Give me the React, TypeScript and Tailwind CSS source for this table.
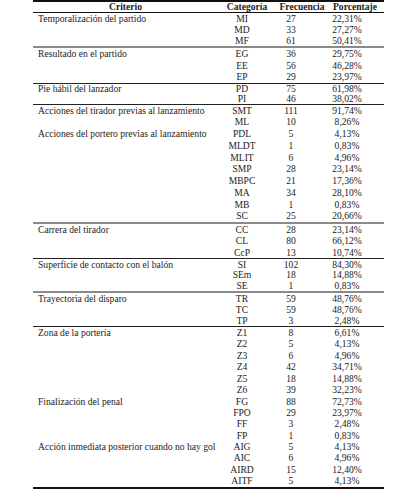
const GROUPS = [
  {
    label: "Temporalización del partido",
    h: "h-[35px]",
    sep: "gray",
    rows: [
      ["MI", "27", "22,31%"],
      ["MD", "33", "27,27%"],
      ["MF", "61", "50,41%"],
    ],
  },
  {
    label: "Resultado en el partido",
    h: "h-[36px]",
    sep: "black",
    rows: [
      ["EG", "36", "29,75%"],
      ["EE", "56", "46,28%"],
      ["EP", "29", "23,97%"],
    ],
  },
  {
    label: "Pie hábil del lanzador",
    h: "h-[21px]",
    sep: "black",
    rows: [
      ["PD", "75", "61,98%"],
      ["PI", "46", "38,02%"],
    ],
  },
  {
    label: "Acciones del tirador previas al lanzamiento",
    h: "h-[23px]",
    sep: "none",
    rows: [
      ["SMT", "111", "91,74%"],
      ["ML", "10", "8,26%"],
    ],
  },
  {
    label: "Acciones del portero previas al lanzamiento",
    h: "h-[96px]",
    sep: "gray",
    rows: [
      ["PDL", "5", "4,13%"],
      ["MLDT", "1", "0,83%"],
      ["MLIT", "6", "4,96%"],
      ["SMP", "28", "23,14%"],
      ["MBPC", "21", "17,36%"],
      ["MA", "34", "28,10%"],
      ["MB", "1", "0,83%"],
      ["SC", "25", "20,66%"],
    ],
  },
  {
    label: "Carrera del tirador",
    h: "h-[35px]",
    sep: "black",
    rows: [
      ["CC", "28", "23,14%"],
      ["CL", "80", "66,12%"],
      ["CcP", "13", "10,74%"],
    ],
  },
  {
    label: "Superficie de contacto con el balón",
    h: "h-[34px]",
    sep: "gray",
    rows: [
      ["SI", "102", "84,30%"],
      ["SEm", "18", "14,88%"],
      ["SE", "1", "0,83%"],
    ],
  },
  {
    label: "Trayectoria del disparo",
    h: "h-[34px]",
    sep: "black",
    rows: [
      ["TR", "59", "48,76%"],
      ["TC", "59", "48,76%"],
      ["TP", "3", "2,48%"],
    ],
  },
  {
    label: "Zona de la portería",
    h: "h-[69px]",
    sep: "none",
    rows: [
      ["Z1", "8", "6,61%"],
      ["Z2", "5", "4,13%"],
      ["Z3", "6", "4,96%"],
      ["Z4", "42", "34,71%"],
      ["Z5", "18", "14,88%"],
      ["Z6", "39", "32,23%"],
    ],
  },
  {
    label: "Finalización del penal",
    h: "h-[45px]",
    sep: "none",
    rows: [
      ["FG", "88", "72,73%"],
      ["FPO", "29", "23,97%"],
      ["FF", "3", "2,48%"],
      ["FP", "1", "0,83%"],
    ],
  },
  {
    label: "Acción inmediata posterior cuando no hay gol",
    h: "h-[46px]",
    sep: "none",
    rows: [
      ["AIG", "5", "4,13%"],
      ["AIC", "6", "4,96%"],
      ["AIRD", "15", "12,40%"],
      ["AITF", "5", "4,13%"],
    ],
  },
];

const SEP: Record<string, string> = {
  gray: "border-b-2 border-[#8a8a8a]",
  black: "border-b border-[#222]",
  none: "",
};

export default function App() {
  return (
    <div className="h-[500px] w-[418px] bg-white font-['Liberation_Serif','Times_New_Roman',serif] text-[9.6px] text-[#1c1c1c]">
      <div className="ml-[33px] w-[351px]">
        <div className="h-[13px] border-t-2 border-b border-[#111]">
          <div className="grid h-full grid-cols-[185px_58px_52px_54px] items-center font-bold leading-none">
            <span className="text-center">Criterio</span>
            <span className="text-center">Categoría</span>
            <span className="text-center">Frecuencia</span>
            <span className="text-center">Porcentaje</span>
          </div>
        </div>

        {GROUPS.map((g, gi) => (
          <div key={gi} className={`flex flex-col ${g.h} ${SEP[g.sep]}`}>
            {g.rows.map((r, ri) => (
              <div
                key={ri}
                className="grid min-h-0 flex-1 grid-cols-[185px_48px_50px_62px] items-center leading-none"
              >
                <span className="whitespace-nowrap pl-[5px]">{ri === 0 ? g.label : ""}</span>
                <span className="text-center">{r[0]}</span>
                <span className="text-center">{r[1]}</span>
                <span className="text-center">{r[2]}</span>
              </div>
            ))}
          </div>
        ))}

        <div className="h-[2px] bg-[#111]" />
      </div>
    </div>
  );
}
